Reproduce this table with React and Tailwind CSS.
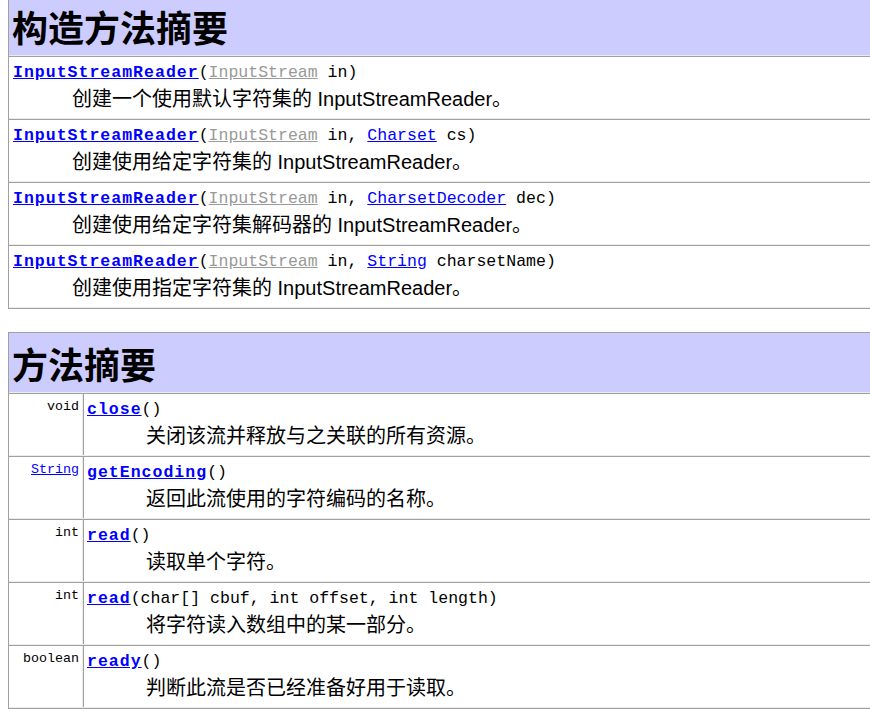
import React from "react";

// =============================================================================
// 데이터
// =============================================================================
const constructors = [
  {
    params: [
      { text: "InputStream", link: "gray" },
      { text: " in" },
    ],
    desc: "创建一个使用默认字符集的 InputStreamReader。",
  },
  {
    params: [
      { text: "InputStream", link: "gray" },
      { text: " in, " },
      { text: "Charset", link: "blue" },
      { text: " cs" },
    ],
    desc: "创建使用给定字符集的 InputStreamReader。",
  },
  {
    params: [
      { text: "InputStream", link: "gray" },
      { text: " in, " },
      { text: "CharsetDecoder", link: "blue" },
      { text: " dec" },
    ],
    desc: "创建使用给定字符集解码器的 InputStreamReader。",
  },
  {
    params: [
      { text: "InputStream", link: "gray" },
      { text: " in, " },
      { text: "String", link: "blue" },
      { text: " charsetName" },
    ],
    desc: "创建使用指定字符集的 InputStreamReader。",
  },
];

const methods = [
  { type: "void", name: "close", params: [], desc: "关闭该流并释放与之关联的所有资源。" },
  { type: "String", typeLink: true, name: "getEncoding", params: [], desc: "返回此流使用的字符编码的名称。" },
  { type: "int", name: "read", params: [], desc: "读取单个字符。" },
  {
    type: "int",
    name: "read",
    params: [{ text: "char[] cbuf, int offset, int length" }],
    desc: "将字符读入数组中的某一部分。",
  },
  { type: "boolean", name: "ready", params: [], desc: "判断此流是否已经准备好用于读取。" },
];

const MONO = "font-['Liberation_Mono','Courier_New',monospace]";
const SANS = "font-['Liberation_Sans','Noto_Sans_CJK_SC',sans-serif]";

// =============================================================================
// 공통 조각
// =============================================================================
function Segment({ seg }) {
  if (seg.link === "gray") {
    return <span className="text-[#999999] underline">{seg.text}</span>;
  }
  if (seg.link === "blue") {
    return <span className="text-[#0000ff] underline">{seg.text}</span>;
  }
  return <span>{seg.text}</span>;
}

function Signature({ name, params }) {
  return (
    <div className={`${MONO} text-[16.55px] leading-[26px] whitespace-pre text-black`}>
      <span className="font-bold tracking-[1px] text-[#0000ff] underline">{name}</span>
      (
      {params.map((seg, i) => (
        <Segment key={i} seg={seg} />
      ))}
      )
    </div>
  );
}

function Desc({ children }) {
  return (
    <div className={`${SANS} pl-[59px] text-[20px] leading-[26px] whitespace-pre text-black`}>
      {children}
    </div>
  );
}

function Header({ title, className }) {
  return (
    <div
      className={`h-[60px] border-b border-[#ececec] bg-[#ccccff] pl-[3px] ${className}`}
    >
      <h2
        className={`font-['Noto_Sans_CJK_SC',sans-serif] text-[36px] font-bold leading-[60px] text-black`}
      >
        {title}
      </h2>
    </div>
  );
}

// =============================================================================
// 메인 컴포넌트
// =============================================================================
export default function App() {
  return (
    <div className="h-[713px] w-[870px] overflow-hidden bg-white">
      {/* 构造方法摘要 */}
      <section className="-mt-[4px] ml-[8px] border-b border-l border-[#a0a0a0]">
        <Header title="构造方法摘要" />
        {constructors.map((c, i) => (
          <div
            key={i}
            className="h-[63px] border-t border-b border-t-[#a0a0a0] border-b-[#ececec] pl-[4px] pt-[3px]"
          >
            <Signature name="InputStreamReader" params={c.params} />
            <Desc>{c.desc}</Desc>
          </div>
        ))}
      </section>

      {/* 方法摘要 */}
      <section className="ml-[8px] mt-[23px] border-t border-b border-l border-[#a0a0a0]">
        <Header title="方法摘要" />
        {methods.map((m, i) => (
          <div
            key={i}
            className="flex h-[63px] border-t border-b border-t-[#a0a0a0] border-b-[#ececec]"
          >
            <div
              className={`${MONO} w-[74px] shrink-0 border-r border-[#ececec] pr-[3px] pt-[4px] text-right text-[13.33px] leading-[18px] text-black`}
            >
              {m.typeLink ? (
                <span className="text-[#0000ff] underline">{m.type}</span>
              ) : (
                m.type
              )}
            </div>
            <div className="flex-1 border-l border-[#a0a0a0] pl-[3px] pt-[3px]">
              <Signature name={m.name} params={m.params} />
              <Desc>{m.desc}</Desc>
            </div>
          </div>
        ))}
      </section>
    </div>
  );
}
